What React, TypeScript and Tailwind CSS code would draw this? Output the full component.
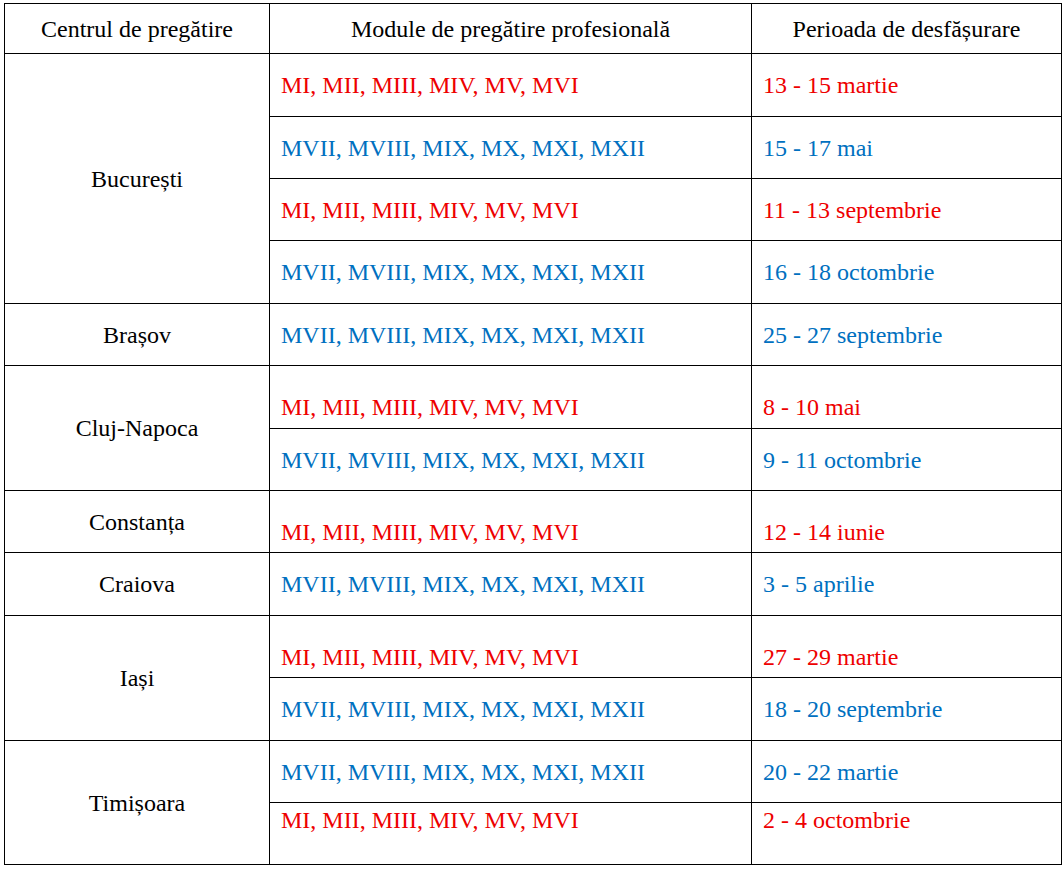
const RED = "text-[#ee0000]";
const BLUE = "text-[#0070c0]";

const GROUP_A = "MI, MII, MIII, MIV, MV, MVI";
const GROUP_B = "MVII, MVIII, MIX, MX, MXI, MXII";

type Row = {
  city?: string;
  span?: number;
  modules: string;
  period: string;
  red: boolean;
  h: string;
  pad?: string;
};

const rows: Row[] = [
  { city: "București", span: 4, modules: GROUP_A, period: "13 - 15 martie", red: true, h: "h-[63px]" },
  { modules: GROUP_B, period: "15 - 17 mai", red: false, h: "h-[62px]" },
  { modules: GROUP_A, period: "11 - 13 septembrie", red: true, h: "h-[62px]" },
  { modules: GROUP_B, period: "16 - 18 octombrie", red: false, h: "h-[63px]" },
  { city: "Brașov", span: 1, modules: GROUP_B, period: "25 - 27 septembrie", red: false, h: "h-[62px]" },
  { city: "Cluj-Napoca", span: 2, modules: GROUP_A, period: "8 - 10 mai", red: true, h: "h-[63px]", pad: "pt-[19px]" },
  { modules: GROUP_B, period: "9 - 11 octombrie", red: false, h: "h-[62px]" },
  { city: "Constanța", span: 1, modules: GROUP_A, period: "12 - 14 iunie", red: true, h: "h-[62px]", pad: "pt-[20px]" },
  { city: "Craiova", span: 1, modules: GROUP_B, period: "3 - 5 aprilie", red: false, h: "h-[63px]" },
  { city: "Iași", span: 2, modules: GROUP_A, period: "27 - 29 martie", red: true, h: "h-[62px]", pad: "pt-[20px]" },
  { modules: GROUP_B, period: "18 - 20 septembrie", red: false, h: "h-[63px]" },
  { city: "Timișoara", span: 2, modules: GROUP_B, period: "20 - 22 martie", red: false, h: "h-[62px]" },
  { modules: GROUP_A, period: "2 - 4 octombrie", red: true, h: "h-[62px]", pad: "align-top pt-[3px]" },
];

export default function App() {
  return (
    <div className="w-[1064px] h-[869px] bg-white pt-[3px] pl-[4px] font-['Liberation_Serif','Times_New_Roman',serif] text-[24px] leading-[28px] text-black">
      <table className="border-collapse table-fixed w-[1057px]">
        <colgroup>
          <col className="w-[265px]" />
          <col className="w-[482px]" />
          <col className="w-[310px]" />
        </colgroup>
        <thead>
          <tr className="h-[50px]">
            <th className="border border-black font-normal text-center align-middle">Centrul de pregătire</th>
            <th className="border border-black font-normal text-center align-middle">Module de pregătire profesională</th>
            <th className="border border-black font-normal text-center align-middle">Perioada de desfășurare</th>
          </tr>
        </thead>
        <tbody>
          {rows.map((r, i) => {
            const color = r.red ? RED : BLUE;
            return (
              <tr key={i} className={r.h}>
                {r.city && (
                  <td rowSpan={r.span} className="border border-black text-center align-middle">
                    {r.city}
                  </td>
                )}
                <td className={`border border-black pl-[11px] align-middle whitespace-nowrap ${color} ${r.pad ?? ""}`}>
                  {r.modules}
                </td>
                <td className={`border border-black pl-[11px] align-middle whitespace-nowrap ${color} ${r.pad ?? ""}`}>
                  {r.period}
                </td>
              </tr>
            );
          })}
        </tbody>
      </table>
    </div>
  );
}
